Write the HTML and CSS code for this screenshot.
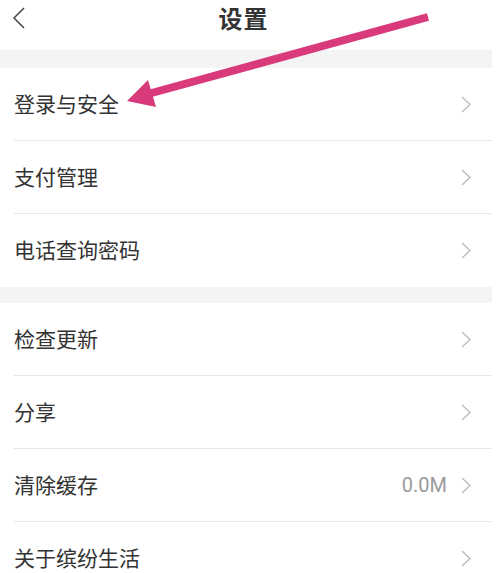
FILE: index.html
```html
<!DOCTYPE html>
<html lang="zh-CN">
<head>
<meta charset="utf-8">
<title>设置</title>
<link rel="stylesheet" href="styles.css">
</head>
<body>
<div class="page">
  <header class="topbar">
    <svg class="back" width="14" height="22" viewBox="0 0 14 22"><path d="M12 1 L2 11 L12 21" fill="none" stroke="#444" stroke-width="1.5"/></svg>
    <h1 class="title">设置</h1>
  </header>
  <div class="band"></div>
  <section class="group">
    <div class="row"><div class="row-inner"><span class="label">登录与安全</span><span class="right"><svg class="chev" width="10" height="17" viewBox="0 0 10 17"><path d="M1 1 L9 8.5 L1 16" fill="none" stroke="#bbb" stroke-width="1.3"/></svg></span></div></div>
    <div class="row"><div class="row-inner"><span class="label">支付管理</span><span class="right"><svg class="chev" width="10" height="17" viewBox="0 0 10 17"><path d="M1 1 L9 8.5 L1 16" fill="none" stroke="#bbb" stroke-width="1.3"/></svg></span></div></div>
    <div class="row"><div class="row-inner"><span class="label">电话查询密码</span><span class="right"><svg class="chev" width="10" height="17" viewBox="0 0 10 17"><path d="M1 1 L9 8.5 L1 16" fill="none" stroke="#bbb" stroke-width="1.3"/></svg></span></div></div>
  </section>
  <div class="band band-mid"></div>
  <section class="group">
    <div class="row"><div class="row-inner"><span class="label">检查更新</span><span class="right"><svg class="chev" width="10" height="17" viewBox="0 0 10 17"><path d="M1 1 L9 8.5 L1 16" fill="none" stroke="#bbb" stroke-width="1.3"/></svg></span></div></div>
    <div class="row"><div class="row-inner"><span class="label">分享</span><span class="right"><svg class="chev" width="10" height="17" viewBox="0 0 10 17"><path d="M1 1 L9 8.5 L1 16" fill="none" stroke="#bbb" stroke-width="1.3"/></svg></span></div></div>
    <div class="row"><div class="row-inner"><span class="label">清除缓存</span><span class="right"><span class="value">0.0M</span><svg class="chev" width="10" height="17" viewBox="0 0 10 17"><path d="M1 1 L9 8.5 L1 16" fill="none" stroke="#bbb" stroke-width="1.3"/></svg></span></div></div>
    <div class="row"><div class="row-inner"><span class="label">关于缤纷生活</span><span class="right"><svg class="chev" width="10" height="17" viewBox="0 0 10 17"><path d="M1 1 L9 8.5 L1 16" fill="none" stroke="#bbb" stroke-width="1.3"/></svg></span></div></div>
  </section>
  <svg class="annot" width="498" height="140" viewBox="0 0 498 140">
    <line x1="148" y1="94" x2="428" y2="17" stroke="#d93a7b" stroke-width="8"/>
    <polygon points="127,101 156,107 148,80" fill="#d93a7b"/>
  </svg>
</div>
</body>
</html>
```

FILE: styles.css
```css
html, body {
  margin: 0;
  padding: 0;
  background: #fff;
}
body {
  font-family: "Noto Sans CJK SC", "Noto Sans", sans-serif;
  color: #333;
  overflow: hidden;
}
.page {
  position: relative;
  width: 492px;
  height: 573px;
  overflow: hidden;
}
.topbar {
  height: 50px;
  display: flex;
  align-items: center;
  justify-content: center;
  position: relative;
}
.back {
  position: absolute;
  left: 12px;
  top: 7px;
}
.title {
  margin: 0 0 14px -5px;
  font-size: 24px;
  font-weight: 700;
  color: #333;
  line-height: 30px;
  letter-spacing: 1px;
}
.band {
  height: 18px;
  background: #f4f4f4;
}
.band-mid {
  height: 16px;
}
.row {
  height: 73px;
  padding-left: 14px;
  box-sizing: border-box;
}
.row-inner {
  height: 100%;
  box-sizing: border-box;
  display: flex;
  align-items: center;
  justify-content: space-between;
  padding-right: 21px;
  border-bottom: 1px solid #e6e6e6;
}
.group .row:last-child .row-inner {
  border-bottom: none;
}
.label {
  font-size: 21px;
  line-height: 24px;
  color: #333;
  padding-bottom: 3px;
}
.right {
  display: flex;
  align-items: center;
}
.value {
  font-family: Roboto, "Noto Sans", sans-serif;
  font-size: 20px;
  color: #9a9a9a;
  margin-right: 14px;
}
.chev {
  display: block;
}
.annot {
  position: absolute;
  left: 0;
  top: 0;
  pointer-events: none;
}
```
